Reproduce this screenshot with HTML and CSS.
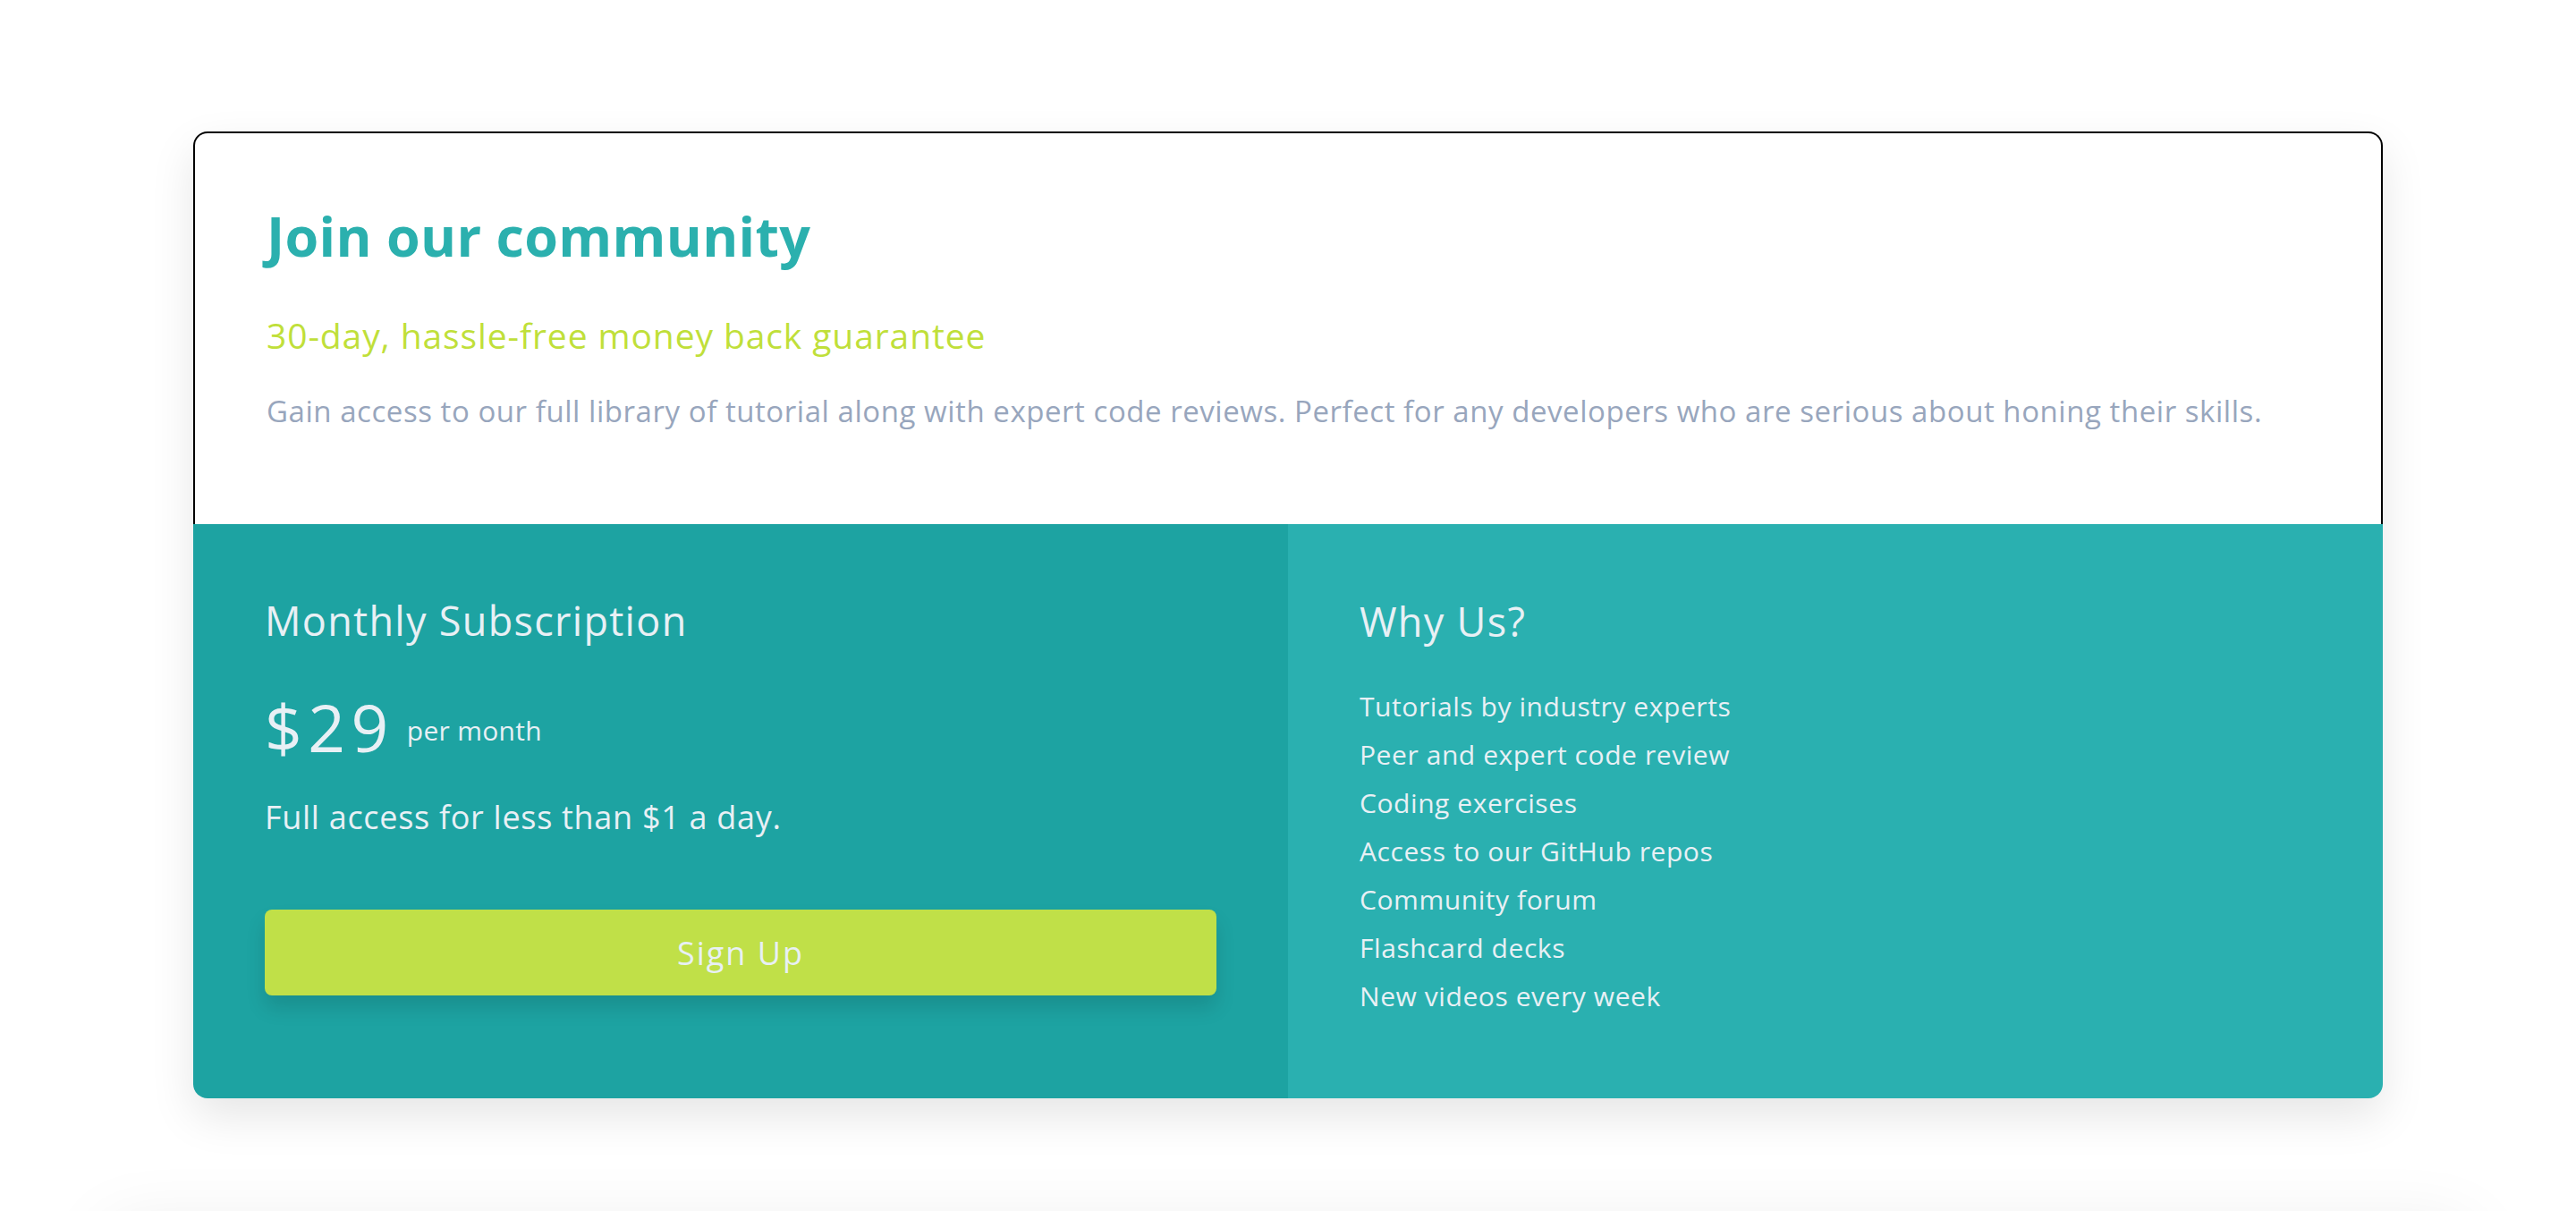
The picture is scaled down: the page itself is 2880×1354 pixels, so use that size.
FILE: index.html
```html
<!DOCTYPE html>
<html lang="en">
<head>
<meta charset="utf-8">
<title>Join our community</title>
<link rel="stylesheet" href="styles.css">
</head>
<body>
<main class="page">
  <section class="card">
    <div class="intro">
      <h1 class="title">Join our community</h1>
      <p class="guarantee">30-day, hassle-free money back guarantee</p>
      <p class="description">Gain access to our full library of tutorial along with expert code reviews. Perfect for any developers who are serious about honing their skills.</p>
    </div>
    <div class="details">
      <div class="subscription">
        <h2 class="panel-title">Monthly Subscription</h2>
        <div class="price"><span class="amount">$29</span><span class="period">per month</span></div>
        <p class="offer">Full access for less than $1 a day.</p>
        <button class="signup" type="button">Sign Up</button>
      </div>
      <div class="why">
        <h2 class="panel-title">Why Us?</h2>
        <ul class="features">
          <li>Tutorials by industry experts</li>
          <li>Peer and expert code review</li>
          <li>Coding exercises</li>
          <li>Access to our GitHub repos</li>
          <li>Community forum</li>
          <li>Flashcard decks</li>
          <li>New videos every week</li>
        </ul>
      </div>
    </div>
  </section>
  <div class="next"></div>
</main>
</body>
</html>
```

FILE: styles.css
```css
* { box-sizing: border-box; }

html, body {
  margin: 0;
  padding: 0;
  background: #ffffff;
}

body {
  font-family: "Open Sans", "Lato", "Liberation Sans", sans-serif;
  overflow: hidden;
}

.page {
  padding-top: 147px;
}

.card {
  width: 2448px;
  margin: 0 auto;
  border-radius: 16px;
  box-shadow: 0 20px 50px rgba(0, 0, 0, 0.1);
}

.intro {
  background: #ffffff;
  border: 2px solid #000000;
  border-bottom: none;
  border-radius: 16px 16px 0 0;
  padding: 78px 80px 0 80px;
  height: 439px;
}

.title {
  margin: 0;
  font-size: 61px;
  line-height: 1.2;
  font-weight: 700;
  color: #2bb0ae;
  letter-spacing: 0.3px;
}

.guarantee {
  margin: 52px 0 0 0;
  font-size: 39px;
  line-height: 1.2;
  color: #c0df3a;
  letter-spacing: 0.9px;
}

.description {
  margin: 41px 0 0 0;
  font-size: 33px;
  line-height: 1.2;
  color: #98a6bd;
  letter-spacing: 0.55px;
}

.details {
  display: grid;
  grid-template-columns: 1fr 1fr;
  border-radius: 0 0 16px 16px;
  overflow: hidden;
  color: #e8f0f5;
}

.subscription {
  background: #1da3a2;
  padding: 81px 80px 115px 80px;
}

.why {
  background: #2ab0b0;
  padding: 82px 80px 0 80px;
}

.panel-title {
  margin: 0;
  font-size: 45px;
  line-height: 1.2;
  font-weight: 400;
  letter-spacing: 1.3px;
}

.price {
  margin-top: 55px;
  font-size: 73px;
  line-height: 73px;
  height: 73px;
}

.amount {
  letter-spacing: 6.5px;
}

.period {
  font-size: 30px;
  margin-left: 14px;
  letter-spacing: 0.3px;
  vertical-align: 13px;
}

.offer {
  margin: 43px 0 0 0;
  font-size: 36px;
  line-height: 1.2;
  letter-spacing: 0.7px;
}

.signup {
  display: flex;
  align-items: center;
  justify-content: center;
  width: 100%;
  height: 96px;
  margin-top: 82px;
  border: none;
  border-radius: 8px;
  background: #c0e048;
  color: #e8f0f5;
  font-family: inherit;
  font-size: 36px;
  letter-spacing: 2px;
  box-shadow: 0 14px 22px rgba(0, 0, 0, 0.12);
}

.features {
  list-style: none;
  margin: 41px 0 0 0;
  padding: 0;
  font-size: 30px;
  line-height: 54px;
  letter-spacing: 0.57px;
}

.next {
  width: 2640px;
  height: 200px;
  margin: 143px auto 0 auto;
  background: #ffffff;
  box-shadow: 0 0 80px rgba(0, 0, 0, 0.08);
}
```
